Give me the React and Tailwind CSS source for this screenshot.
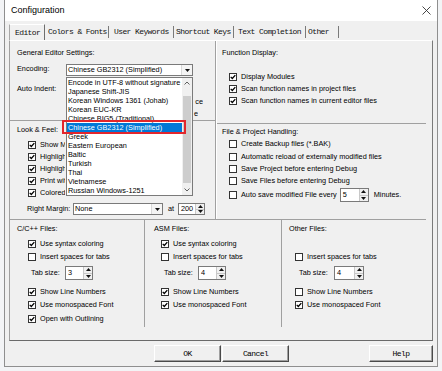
import React from 'react'

const encodings = [
  'Encode in UTF-8 without signature',
  'Japanese Shift-JIS',
  'Korean Windows 1361 (Johab)',
  'Korean EUC-KR',
  'Chinese BIG5 (Traditional)',
  'Chinese GB2312 (Simplified)',
  'Greek',
  'Eastern European',
  'Baltic',
  'Turkish',
  'Thai',
  'Vietnamese',
  'Russian Windows-1251',
]

const tabs = [
  { label: 'Colors & Fonts', cls: 'w-[64px] pl-[3px]' },
  { label: 'User Keywords', cls: 'w-[65px] pl-[5px]' },
  { label: 'Shortcut Keys', cls: 'w-[60px] pl-[2px]' },
  { label: 'Text Completion', cls: 'w-[72px] pl-[4px]' },
  { label: 'Other', cls: 'w-[33px] pl-[2px]' },
]

function Tri({ up }) {
  return (
    <svg width="5" height="3" viewBox="0 0 5 3">
      <path d={up ? 'M0 3L2.5 0L5 3Z' : 'M0 0L5 0L2.5 3Z'} fill="#111" />
    </svg>
  )
}

function Check({ on }) {
  return (
    <span className="w-[8px] h-[8px] border border-[#333] bg-white flex items-center justify-center shrink-0">
      {on && (
        <svg width="6" height="6" viewBox="0 0 6 6">
          <path d="M0.7 2.9L2.3 4.5L5.3 1.1" fill="none" stroke="#000" strokeWidth="1.3" />
        </svg>
      )}
    </span>
  )
}

function CheckRow({ on, label, className = 'h-[12px]', clip = '' }) {
  return (
    <div className={`flex items-center gap-[4px] ${className}`}>
      <Check on={on} />
      <span className={`whitespace-nowrap ${clip}`}>{label}</span>
    </div>
  )
}

function Spin({ value, className }) {
  return (
    <div className={`flex h-full bg-white border border-[#7a7a7a] ${className}`}>
      <span className="flex-1 pl-[2px] flex items-center">{value}</span>
      <span className="w-[9px] flex flex-col border-l border-[#c8c8c8]">
        <span className="flex-1 flex items-center justify-center bg-[#f0f0f0] border-b border-[#c8c8c8]">
          <Tri up />
        </span>
        <span className="flex-1 flex items-center justify-center bg-[#f0f0f0]">
          <Tri />
        </span>
      </span>
    </div>
  )
}

function Select({ value, className }) {
  return (
    <div className={`flex items-center h-[12px] bg-white border border-[#7a7a7a] ${className}`}>
      <span className="flex-1 pl-[1px] whitespace-nowrap">{value}</span>
      <span className="w-[11px] h-full flex items-center justify-center bg-[#f4f4f4] border-l border-[#d8d8d8]">
        <Tri />
      </span>
    </div>
  )
}

function Button({ label, className }) {
  return (
    <div
      className={`h-[17px] flex items-center justify-center border border-t-white border-l-white border-r-[#4a4a4a] border-b-[#4a4a4a] shadow-[inset_-1px_-1px_0_#a0a0a0] ${className}`}
    >
      {label}
    </div>
  )
}

export default function App() {
  return (
    <div className="w-[442px] h-[371px] bg-[#f3f4f6] overflow-hidden font-['Liberation_Sans',Arial,sans-serif] text-[7.3px] leading-none text-black">
      <div className="ml-[4px] w-[434px] h-[367px] border border-t-0 border-[#8f8f8f] bg-[#f0f0f0] flex flex-col">
        {/* title bar */}
        <div className="h-[21px] shrink-0 bg-white flex items-center justify-between pl-[6px] pr-[6px]">
          <span className="text-[9px]">Configuration</span>
          <svg width="9" height="9" viewBox="0 0 9 9">
            <path d="M0.5 0.5L8.5 8.5M8.5 0.5L0.5 8.5" stroke="#333" strokeWidth="0.9" />
          </svg>
        </div>

        {/* tabs */}
        <div className="mt-[3px] ml-[4px] h-[16px] shrink-0 flex font-['Liberation_Mono',monospace] text-[8px] tracking-[-0.6px] text-[#111]">
          <div className="w-[36px] h-full border-l border-t border-r border-l-[#a8a8a8] border-t-white border-r-[#6e6e6e] pl-[5px] flex items-center">
            Editor
          </div>
          {tabs.map((t) => (
            <div key={t.label} className={`${t.cls} h-full flex items-center`}>
              <span className="flex-1 whitespace-nowrap">{t.label}</span>
              <span className="w-px h-[12px] bg-[#7a7a7a]" />
            </div>
          ))}
        </div>

        {/* tab page */}
        <div className="ml-[4px] w-[424px] h-[301px] shrink-0 border border-t-white border-l-[#a0a0a0] border-r-[#7a7a7a] border-b-[#6a6a6a] relative flex flex-col">
          <div className="h-[178px] flex">
            {/* left column */}
            <div className="w-[206px] border-r border-[#a0a0a0] flex flex-col">
              <div className="h-[80px] border-b border-[#a0a0a0] pl-[7px] pt-[6px] flex flex-col">
                <div className="h-[12px] flex items-center">General Editor Settings:</div>
                <div className="mt-[5px] h-[12px] flex items-center">
                  <span className="w-[49px] -mt-[2px]">Encoding:</span>
                  <Select value="Chinese GB2312 (Simplified)" className="w-[127px]" />
                </div>
                <div className="mt-[7px] h-[12px] flex items-center">Auto Indent:</div>
                <div className="mt-[1px] h-[12px] pl-[176px] flex items-center">
                  <span className="w-[10px] overflow-hidden flex justify-end whitespace-nowrap">ce</span>
                </div>
                <div className="h-[12px] pl-[176px] flex items-center">
                  <span className="w-[5px] overflow-hidden flex justify-end whitespace-nowrap">e</span>
                </div>
              </div>
              <div className="flex-1 pl-[7px] pt-[3px] flex flex-col">
                <div className="h-[12px] flex items-center">Look &amp; Feel:</div>
                <div className="mt-[3px] pl-[11px] flex flex-col">
                  <CheckRow on label="Show Matching Braces" clip="w-[25px] overflow-hidden" />
                  <CheckRow on label="Highlight Current Line" clip="w-[25px] overflow-hidden" />
                  <CheckRow on label="Highlight Selected Words" clip="w-[25px] overflow-hidden" />
                  <CheckRow on label="Print with syntax colors" clip="w-[25px] overflow-hidden" />
                  <CheckRow on label="Colored Editor Tabs" clip="w-[25px] overflow-hidden" />
                </div>
                <div className="mt-[4px] h-[12px] pl-[10px] flex items-center">
                  <span className="w-[46px]">Right Margin:</span>
                  <Select value="None" className="w-[90px]" />
                  <span className="ml-[5px] w-[10px]">at</span>
                  <Spin value="200" className="w-[27px]" />
                </div>
              </div>
            </div>

            {/* right column */}
            <div className="flex-1 border-l border-white flex flex-col">
              <div className="h-[83px] mr-[6px] border-b border-[#a0a0a0] pl-[5px] pt-[6px] flex flex-col">
                <div className="h-[12px] flex items-center">Function Display:</div>
                <div className="mt-[12px] pl-[7px] flex flex-col">
                  <CheckRow on label="Display Modules" />
                  <CheckRow on label="Scan function names in project files" />
                  <CheckRow on label="Scan function names in current editor files" />
                </div>
              </div>
              <div className="flex-1 pl-[5px] pt-[2px] flex flex-col">
                <div className="h-[12px] flex items-center">File &amp; Project Handling:</div>
                <div className="pl-[7px] flex flex-col">
                  <CheckRow label="Create Backup files (*.BAK)" />
                  <CheckRow className="mt-[1px] h-[12px]" label="Automatic reload of externally modified files" />
                  <CheckRow label="Save Project before entering Debug" />
                  <CheckRow label="Save Files before entering Debug" />
                  <div className="mt-[1px] h-[14px] flex items-center gap-[4px]">
                    <Check />
                    <span className="whitespace-nowrap">Auto save modified File every</span>
                    <Spin value="5" className="ml-[-1px] w-[29px]" />
                    <span className="ml-[1px]">Minutes.</span>
                  </div>
                </div>
              </div>
            </div>
          </div>

          <div className="h-px w-[416px] bg-[#a0a0a0]" />

          {/* file type columns */}
          <div className="h-[107px] flex">
            <div className="w-[135px] border-r border-[#a0a0a0] pt-[3px] pl-[7px] flex flex-col">
              <div className="h-[12px] flex items-center">C/C++ Files:</div>
              <div className="mt-[2px] pl-[11px] flex flex-col">
                <CheckRow on className="h-[13px]" label="Use syntax coloring" />
                <CheckRow className="h-[13px]" label="Insert spaces for tabs" />
              </div>
              <div className="mt-[3px] h-[14px] pl-[14px] flex items-center">
                <span className="w-[34px]">Tab size:</span>
                <Spin value="3" className="w-[28px]" />
              </div>
              <div className="mt-[5px] pl-[11px] flex flex-col">
                <CheckRow on className="h-[13px]" label="Show Line Numbers" />
                <CheckRow on className="h-[13px]" label="Use monospaced Font" />
                <CheckRow on className="mt-[1px] h-[13px]" label="Open with Outlining" />
              </div>
            </div>
            <div className="w-[137px] border-r border-[#a0a0a0] pt-[3px] pl-[9px] flex flex-col">
              <div className="h-[12px] flex items-center">ASM Files:</div>
              <div className="mt-[2px] pl-[7px] flex flex-col">
                <CheckRow on className="h-[13px]" label="Use syntax coloring" />
                <CheckRow className="h-[13px]" label="Insert spaces for tabs" />
              </div>
              <div className="mt-[3px] h-[14px] pl-[10px] flex items-center">
                <span className="w-[34px]">Tab size:</span>
                <Spin value="4" className="w-[28px]" />
              </div>
              <div className="mt-[5px] pl-[7px] flex flex-col">
                <CheckRow on className="h-[13px]" label="Show Line Numbers" />
                <CheckRow on className="h-[13px]" label="Use monospaced Font" />
              </div>
            </div>
            <div className="flex-1 pt-[3px] pl-[7px] flex flex-col">
              <div className="h-[12px] flex items-center">Other Files:</div>
              <div className="mt-[2px] pl-[6px] flex flex-col">
                <div className="h-[13px]" />
                <CheckRow className="h-[13px]" label="Insert spaces for tabs" />
              </div>
              <div className="mt-[3px] h-[14px] pl-[10px] flex items-center">
                <span className="w-[35px]">Tab size:</span>
                <Spin value="4" className="w-[30px]" />
              </div>
              <div className="mt-[5px] pl-[6px] flex flex-col">
                <CheckRow className="h-[13px]" label="Show Line Numbers" />
                <CheckRow on className="h-[13px]" label="Use monospaced Font" />
              </div>
            </div>
          </div>

          {/* open encoding list */}
          <div className="absolute left-[56px] top-[36px] w-[127px] h-[119px] bg-white border border-[#7a7a7a] flex">
            <div className="flex-1 flex flex-col">
              {encodings.map((e, i) => (
                <div
                  key={e}
                  className={`h-[9px] pl-[1px] flex items-center whitespace-nowrap overflow-hidden ${
                    i === 5 ? 'bg-[#0078d7] text-white' : ''
                  }`}
                >
                  {e}
                </div>
              ))}
            </div>
            <div className="w-[10px] bg-[#f0f0f0] flex flex-col">
              <div className="h-[10px] flex items-center justify-center">
                <svg width="6" height="4" viewBox="0 0 6 4">
                  <path d="M0.5 3.5L3 1L5.5 3.5" fill="none" stroke="#606060" strokeWidth="1" />
                </svg>
              </div>
              <div className="flex-1 pt-[8px] pb-[2px] px-[1px] flex">
                <div className="flex-1 bg-[#cdcdcd]" />
              </div>
              <div className="h-[10px] flex items-center justify-center">
                <svg width="6" height="4" viewBox="0 0 6 4">
                  <path d="M0.5 0.5L3 3L5.5 0.5" fill="none" stroke="#606060" strokeWidth="1" />
                </svg>
              </div>
            </div>
          </div>
          <div className="absolute left-[52px] top-[79px] w-[124px] h-[14px] border-2 border-[#e3262c]" />
        </div>

        {/* buttons */}
        <div className="mt-[4px] flex font-['Liberation_Mono',monospace] text-[8px] tracking-[-0.6px]">
          <Button label="OK" className="ml-[149px] w-[67px]" />
          <Button label="Cancel" className="ml-[1px] w-[67px]" />
          <Button label="Help" className="ml-[80px] w-[64px]" />
        </div>
      </div>
    </div>
  )
}
